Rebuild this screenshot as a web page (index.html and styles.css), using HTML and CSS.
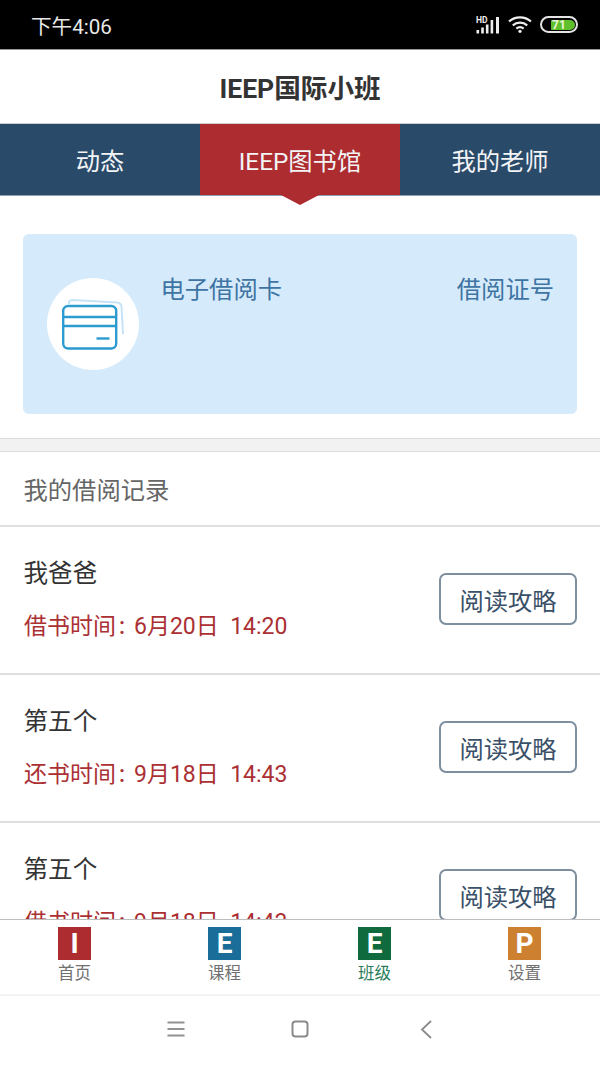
FILE: index.html
```html
<!DOCTYPE html>
<html lang="zh-CN">
<head>
<meta charset="utf-8">
<title>IEEP国际小班</title>
<link rel="stylesheet" href="styles.css">
</head>
<body>
<div class="app">
  <div class="status">
    <span class="clock">下午4:06</span>
    <div class="status-icons">
      <svg width="24" height="18" viewBox="0 0 24 18"><text x="0" y="7" class="hd">HD</text><path d="M0.500 14h2.600v3.500h-2.600zM5.200 11.500h2.600v6h-2.600zM9.900 8.500h2.600v9h-2.600zM14.600 4h2.600v13.500h-2.600zM20 1h3v16.500h-3z" fill="#eee"/></svg>
      <svg width="24" height="17" viewBox="0 0 24 17" fill="none" stroke="#eee" stroke-width="2.200"><path d="M1 5.500c6.200-5.500 15.800-5.500 22 0M4.800 9.300c4.200-3.600 10.200-3.600 14.400 0M8.300 12.600c2.200-1.700 5.200-1.700 7.400 0"/><circle cx="12" cy="15.300" r="1.600" fill="#eee" stroke="none"/></svg>
      <div class="battery"><div class="battery-fill"><span>71</span></div></div>
    </div>
  </div>
  <header class="title-bar">IEEP国际小班</header>
  <nav class="tabs">
    <div class="tab">动态</div>
    <div class="tab tab-active">IEEP图书馆</div>
    <div class="tab">我的老师</div>
  </nav>
  <main class="content">
    <section class="card-wrap">
      <div class="card">
        <div class="card-avatar">
          <svg class="card-icon" width="62" height="52" viewBox="0 0 62 52" fill="none">
            <path d="M7 6V5q0-3 4-3l44 2.500q4 .5 4.500 4L61 36" stroke="#c6e4f7" stroke-width="2"/>
            <rect x="1.200" y="8" width="53" height="42.500" rx="5" fill="#fff" stroke="#2b9bd0" stroke-width="2.400"/>
            <path d="M1.200 19h53M1.200 28h53" stroke="#2b9bd0" stroke-width="2.400"/>
            <path d="M34.500 40.500h13" stroke="#2b9bd0" stroke-width="2.400"/>
          </svg>
        </div>
        <div class="card-label">电子借阅卡</div>
        <div class="card-number">借阅证号</div>
      </div>
    </section>
    <div class="band"></div>
    <div class="section-title">我的借阅记录</div>
    <div class="row">
      <div class="row-text">
        <div class="book">我爸爸</div>
        <div class="when">借书时间<span class="colon">:</span>6月20日&nbsp;&nbsp;14:20</div>
      </div>
      <div class="guide">阅读攻略</div>
    </div>
    <div class="row">
      <div class="row-text">
        <div class="book">第五个</div>
        <div class="when">还书时间<span class="colon">:</span>9月18日&nbsp;&nbsp;14:43</div>
      </div>
      <div class="guide">阅读攻略</div>
    </div>
    <div class="row">
      <div class="row-text">
        <div class="book">第五个</div>
        <div class="when">借书时间<span class="colon">:</span>9月18日&nbsp;&nbsp;14:43</div>
      </div>
      <div class="guide">阅读攻略</div>
    </div>
  </main>
  <footer class="tabbar">
    <div class="bar-item"><div class="bar-icon red">I</div><span>首页</span></div>
    <div class="bar-item"><div class="bar-icon blue">E</div><span>课程</span></div>
    <div class="bar-item bar-active"><div class="bar-icon green">E</div><span>班级</span></div>
    <div class="bar-item"><div class="bar-icon orange">P</div><span>设置</span></div>
  </footer>
  <div class="sysnav">
    <svg width="18" height="16" viewBox="0 0 18 16" fill="none" stroke="#929292" stroke-width="1.800"><path d="M0.500 1.500h17M0.500 8h17M0.500 14.500h17"/></svg>
    <svg width="18" height="18" viewBox="0 0 18 18" fill="none" stroke="#8a8a8a" stroke-width="2"><rect x="1.500" y="1.500" width="15" height="15" rx="3"/></svg>
    <svg class="nav-back" width="12" height="19" viewBox="0 0 12 19" fill="none" stroke="#8a8a8a" stroke-width="1.800"><path d="M11 1L2 9.500l9 8.500"/></svg>
  </div>
</div>
</body>
</html>
```
FILE: styles.css
```css
* { box-sizing: border-box; }
html, body { margin: 0; padding: 0; }
body { font-family: Roboto, "Noto Sans CJK SC", sans-serif; background: #fff; }
.app { width: 600px; height: 1067px; display: flex; flex-direction: column; overflow: hidden; }

.status { height: 50px; flex: none; background: #000; border-bottom: 1px solid #9a9a9a; display: flex; align-items: center; justify-content: space-between; padding: 0 22px 0 31px; color: #e8e8e8; }
.clock { font-size: 20.6px; }
.status-icons { display: flex; align-items: center; gap: 8px; }
.hd { font: bold 8.500px Roboto, sans-serif; fill: #eee; }
.battery { width: 38px; height: 17px; border: 2px solid #e4e4e4; border-radius: 9px; padding: 1.500px 1px 1.500px 0; display: flex; justify-content: flex-end; }
.battery-fill { width: 24px; height: 10px; background: #5fc02c; border-radius: 1px 5px 5px 1px; display: flex; align-items: center; }
.battery-fill span { font-size: 12px; font-weight: 700; color: #eaf6dc; line-height: 10px; margin-left: 1px; }

.title-bar { height: 74px; flex: none; background: #fff; display: flex; align-items: center; justify-content: center; font-size: 26.6px; font-weight: 700; color: #333; padding-bottom: 1px; border-bottom: 1px solid #c8ced3; }

.tabs { height: 72px; flex: none; display: flex; background: #2a4a69; border-bottom: 1px solid #8fa0b0; }
.tab { flex: 1; display: flex; align-items: center; justify-content: center; color: #f2f4f6; font-size: 24.300px; position: relative; }
.tab-active { background: #ad2c30; }
.tab-active::after { content: ""; position: absolute; left: 50%; top: 100%; margin-left: -19px; border-style: solid; border-width: 10px 19px 0; border-color: #ad2c30 transparent transparent; }

.content { flex: 1; min-height: 0; overflow: hidden; background: #fff; }
.card-wrap { padding: 38px 23px 24px 23px; }
.card { height: 180px; background: #d5ebfc; border-radius: 6px; display: flex; align-items: flex-start; padding: 44px 23px 0 23.500px; }
.card-avatar { width: 92px; height: 92px; border-radius: 50%; background: #fff; display: flex; align-items: center; justify-content: flex-start; padding-left: 15px; flex: none; }
.card-label, .card-number { font-size: 24.300px; line-height: 24px; color: #3f74a3; }
.card-label { margin-left: 22px; flex: 1; }

.band { height: 14px; background: #f2f2f2; border-top: 1px solid #dcdcdc; border-bottom: 1px solid #dcdcdc; }
.section-title { height: 75px; display: flex; align-items: center; padding-left: 23.500px; font-size: 24.300px; color: #666; border-bottom: 2px solid #e0e0e0; }

.row { height: 148px; display: flex; align-items: center; justify-content: space-between; padding: 0 23px 2px 24px; border-bottom: 2px solid #dedede; }
.row-text { display: flex; flex-direction: column; gap: 19px; padding-top: 2px; }
.book { font-size: 24.600px; line-height: 34px; color: #333; margin-left: -0.500px; }
.when { font-size: 23px; line-height: 34px; color: #ab3034; }
.colon { display: inline-block; width: 18px; padding-left: 3px; font-weight: 500; }
.guide { width: 138px; height: 52px; border: 2px solid #7e8fa0; border-radius: 7px; display: flex; align-items: center; justify-content: center; font-size: 24.300px; color: #3a5068; }

.tabbar { height: 77px; flex: none; display: flex; background: #fff; border-top: 1px solid #bdbdbd; border-bottom: 2px solid #f3f3f3; margin-top: -1px; position: relative; }
.bar-item { width: 150px; display: flex; flex-direction: column; align-items: center; padding: 7px 1px 0 0; font-size: 16.500px; line-height: 22px; color: #707070; }
.bar-active { color: #2a7d5c; }
.bar-icon { width: 33px; height: 33px; display: flex; align-items: center; justify-content: center; color: #fff; font-size: 28px; font-weight: 700; line-height: 33px; margin-bottom: 3px; }
.red { background: #ad2c30; }
.blue { background: #1a6d99; }
.green { background: #0f6b3e; }
.orange { background: #cc8030; }

.sysnav { height: 71px; flex: none; background: #fff; display: flex; align-items: center; gap: 106px; padding: 0 0 5px 167px; }
.nav-back { margin-left: 5px; }
```
